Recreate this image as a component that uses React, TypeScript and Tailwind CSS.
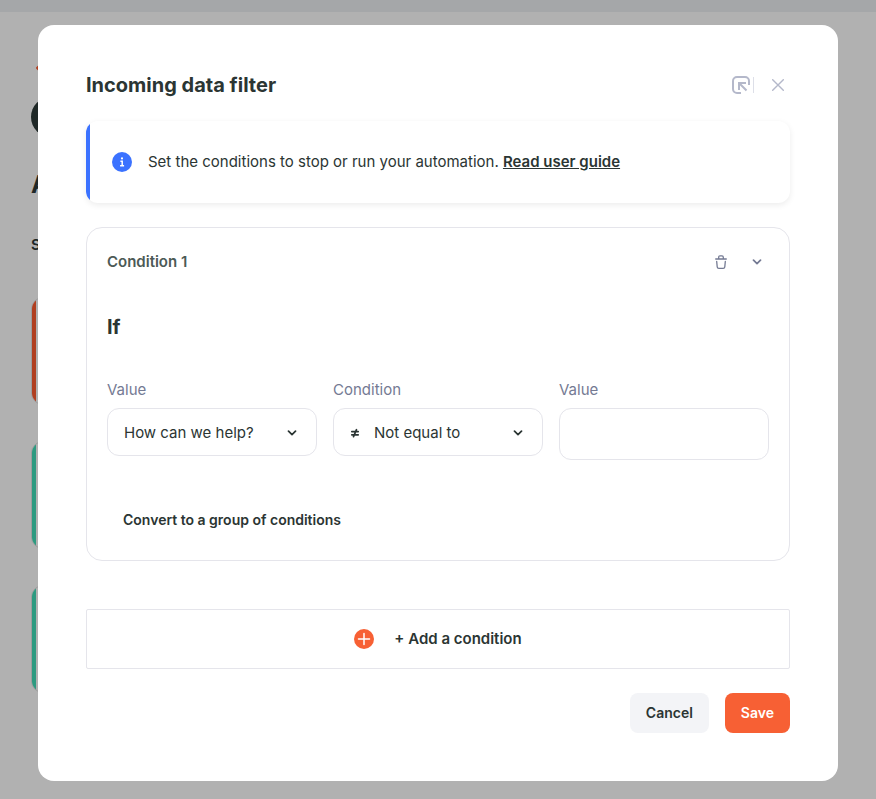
import React from "react";

const valueOptions = ["How can we help?", "Name", "Email"];

const conditionOptions = ["Not equal to", "Equal to", "Contains"];

const stepColors = ["bg-[#b03f20]", "bg-[#2d9a80]", "bg-[#2d9a80]"];

const Chevron = ({ className = "" }) => (
  <svg className={className} width="10" height="6" viewBox="0 0 10 6" fill="none" stroke="currentColor" strokeWidth="1.700" strokeLinecap="round" strokeLinejoin="round" aria-hidden="true">
    <path d="M1.500 1.200L5 4.700l3.500-3.500" />
  </svg>
);

const PageBehind = () => {
  return (
    <div className="col-start-1 row-start-1 text-[#1f2827]" aria-hidden="true">
      <div className="h-3 bg-[#a5a7a9]" />
      <div className="pt-[46px] pr-12 pl-[31px]">
        <svg className="ml-1" width="20" height="20" viewBox="0 0 20 20" fill="none" stroke="#b03f20" strokeWidth="2" strokeLinecap="round" strokeLinejoin="round">
          <path d="M8 4l-6 6 6 6M2 10h16" />
        </svg>
        <div className="mt-[19px] size-10 rounded-full bg-[#1f2827]" />
        <div className="mt-8 text-2xl leading-8 font-bold">A</div>
        <div className="mt-8 text-[15px] leading-6 font-semibold">S</div>
        <div className="mt-10 flex flex-col gap-9">
          {stepColors.map((color, index) => {
            return (
              <div key={index} className="flex h-[108px] overflow-hidden rounded-xl border border-[#9d9d9d]">
                <div className={`w-1 ${color}`} />
              </div>
            );
          })}
        </div>
      </div>
    </div>
  );
};

const Header = () => {
  return (
    <header className="flex h-6 items-center justify-between">
      <h1 className="text-xl leading-6 font-bold">Incoming data filter</h1>
      <div className="flex items-center text-[#b4b8ca]">
        <button type="button" aria-label="Open in a panel">
          <svg width="18" height="18" viewBox="0 0 18 18" fill="none" stroke="currentColor" strokeWidth="2" aria-hidden="true">
            <path d="M9 17H5a4 4 0 0 1-4-4V5a4 4 0 0 1 4-4h8a4 4 0 0 1 4 4v4" />
            <path d="M7 14V7h7M7 7l7.500 7.500" />
          </svg>
        </button>
        <div className="ml-[3px] h-4 w-px bg-[#dddfe8]" />
        <button type="button" aria-label="Close" className="ml-3 flex size-6 items-center justify-center">
          <svg width="12" height="12" viewBox="0 0 12 12" fill="none" stroke="currentColor" strokeWidth="1.400" strokeLinecap="round" aria-hidden="true">
            <path d="M.7.7l10.600 10.600M11.300.7L.7 11.300" />
          </svg>
        </button>
      </div>
    </header>
  );
};

const Banner = () => {
  return (
    <div className="mt-6 flex h-[82px] overflow-hidden rounded-xl shadow-[0_2px_6px_rgba(0,0,0,0.08)]">
      <div className="w-1 bg-[#3b72ff]" />
      <div className="flex items-center gap-4 px-[22px]">
        <svg className="shrink-0" width="20" height="20" viewBox="0 0 20 20" aria-hidden="true">
          <circle cx="10" cy="10" r="10" fill="#3b72ff" />
          <circle cx="10" cy="6.400" r="1.100" fill="#fff" />
          <path d="M8.400 9.300h1.800v4.200M8.100 13.700h4" fill="none" stroke="#fff" strokeWidth="1.500" />
        </svg>
        <p className="text-[15px] leading-6">
          Set the conditions to stop or run your automation.{" "}
          <a href="#guide" className="font-semibold underline">Read user guide</a>
        </p>
      </div>
    </div>
  );
};

const ConditionCard = () => {
  const [value, setValue] = React.useState(valueOptions[0]);
  const [condition, setCondition] = React.useState(conditionOptions[0]);
  const [compareTo, setCompareTo] = React.useState("");

  return (
    <section className="mt-6 rounded-2xl border border-[#e5e5eb] p-5">
      <div className="flex h-7 items-center justify-between">
        <h2 className="text-[15px] leading-6 font-semibold text-[#4c5a56]">Condition 1</h2>
        <div className="flex gap-3 text-[#747a93]">
          <button type="button" aria-label="Delete condition" className="flex size-6 items-center justify-center">
            <svg width="12" height="14" viewBox="0 0 12 14" fill="none" stroke="currentColor" strokeWidth="1.300" strokeLinecap="round" strokeLinejoin="round" aria-hidden="true">
              <path d="M.7 4h10.600M3.700 3.800V2.200Q3.700.8 5 .8h2q1.300 0 1.300 1.400v1.600M1.700 6.500l.5 5.300q.2 1.500 1.600 1.500h4.400q1.400 0 1.600-1.500l.5-5.300" />
            </svg>
          </button>
          <button type="button" aria-label="Collapse condition" className="flex size-6 items-center justify-center">
            <Chevron />
          </button>
        </div>
      </div>
      <h3 className="mt-9 text-xl leading-[30px] font-bold">If</h3>
      <div className="mt-[38px] grid grid-cols-3 items-start gap-4 text-[15px]">
        <div>
          <label htmlFor="value" className="block leading-5 text-[#747a93]">Value</label>
          <div className="relative mt-2">
            <select
              id="value"
              className="h-12 w-full appearance-none rounded-xl border border-[#e5e5eb] bg-white pt-0.5 pr-8 pl-4"
              value={value}
              onChange={(e) => setValue(e.target.value)}
            >
              {valueOptions.map((option) => (
                <option key={option}>{option}</option>
              ))}
            </select>
            <Chevron className="pointer-events-none absolute top-[22px] right-5" />
          </div>
        </div>
        <div>
          <label htmlFor="condition" className="block leading-5 text-[#747a93]">Condition</label>
          <div className="relative mt-2">
            <select
              id="condition"
              className="h-12 w-full appearance-none rounded-xl border border-[#e5e5eb] bg-white pt-0.5 pr-8 pl-10"
              value={condition}
              onChange={(e) => setCondition(e.target.value)}
            >
              {conditionOptions.map((option) => (
                <option key={option}>{option}</option>
              ))}
            </select>
            <svg className="pointer-events-none absolute top-5 left-[17px]" width="10" height="10" viewBox="0 0 10 10" fill="none" stroke="currentColor" strokeWidth="1.700" strokeLinecap="round" aria-hidden="true">
              <path d="M1.800 3.600h6.400M1.800 6.800h6.400M6.500 1.700L3.500 8.700" />
            </svg>
            <Chevron className="pointer-events-none absolute top-[22px] right-5" />
          </div>
        </div>
        <div>
          <label htmlFor="compare" className="block leading-5 text-[#747a93]">Value</label>
          <input
            id="compare"
            type="text"
            className="mt-2 block h-[52px] w-full rounded-xl border border-[#e5e5eb] px-4"
            value={compareTo}
            onChange={(e) => setCompareTo(e.target.value)}
          />
        </div>
      </div>
      <button type="button" className="mt-10 h-10 px-4 text-sm font-semibold">
        Convert to a group of conditions
      </button>
    </section>
  );
};

export default function App() {
  return (
    <div className="grid min-h-screen bg-[#b1b1b1] font-['Inter',sans-serif]">
      <PageBehind />
      <div className="z-10 col-start-1 row-start-1 px-[38px] pt-[25px] pb-[18px]">
        <main role="dialog" aria-label="Incoming data filter" className="mx-auto max-w-[800px] rounded-2xl bg-white p-12 text-[#2b3533]">
          <Header />
          <Banner />
          <ConditionCard />
          <button type="button" className="mt-12 flex h-[60px] w-full items-center justify-center gap-5 rounded-xs border border-[#e5e5eb] text-[15px] font-semibold">
            <svg width="20" height="20" viewBox="0 0 20 20" aria-hidden="true">
              <circle cx="10" cy="10" r="10" fill="#f76034" />
              <path d="M10 4.500v11M4.500 10h11" stroke="#fff" strokeWidth="1.500" strokeLinecap="round" />
            </svg>
            + Add a condition
          </button>
          <div className="mt-6 flex justify-end gap-4 text-sm font-semibold">
            <button type="button" className="h-10 rounded-lg bg-[#f3f4f7] px-4">Cancel</button>
            <button type="button" className="h-10 rounded-lg bg-[#f76034] px-4 text-white">Save</button>
          </div>
        </main>
      </div>
    </div>
  );
}
